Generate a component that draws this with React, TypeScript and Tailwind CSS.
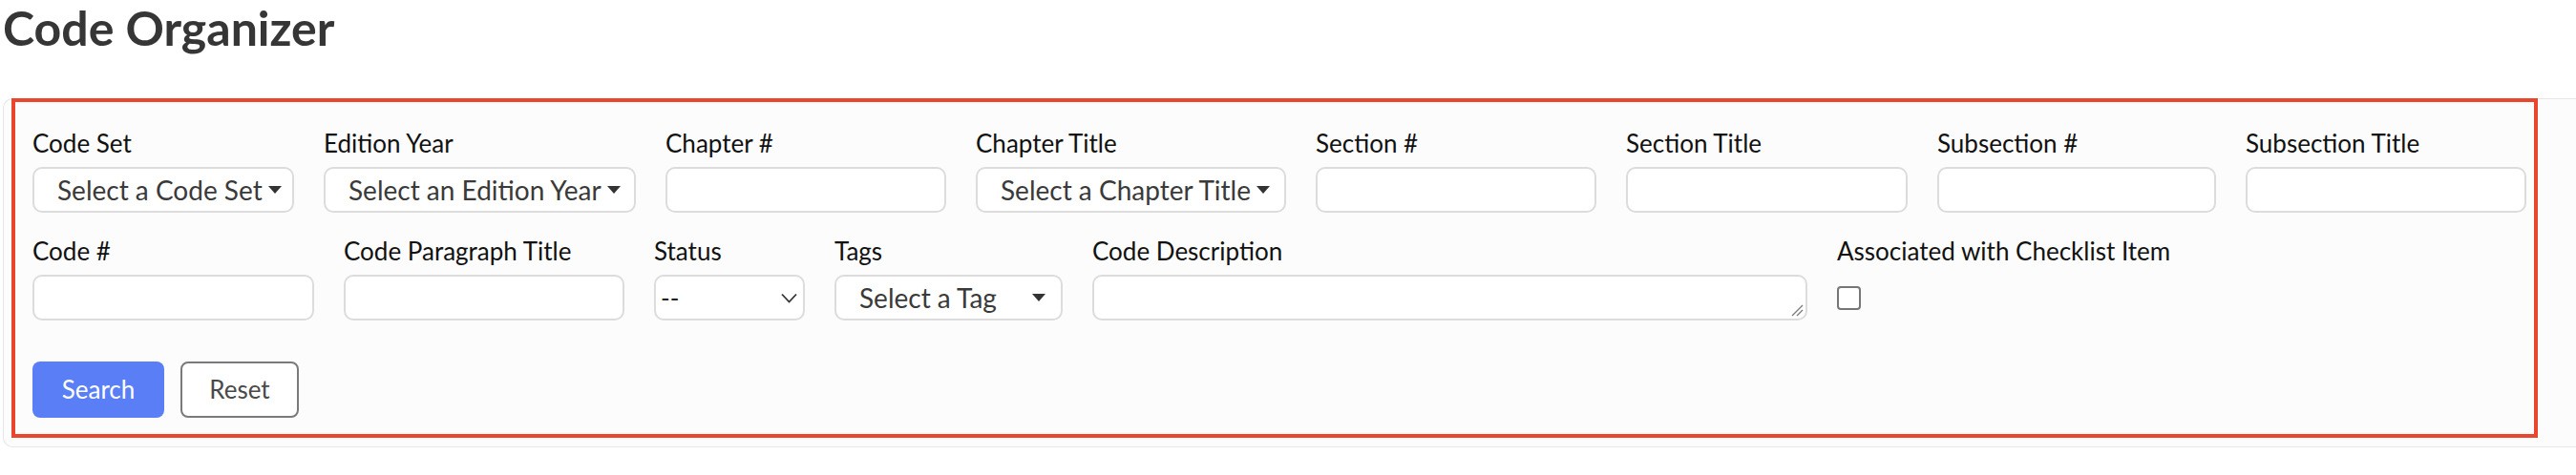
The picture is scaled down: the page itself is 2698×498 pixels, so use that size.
import React from "react";

const Caret = () => (
  <svg width="14" height="8" viewBox="0 0 14 8" className="shrink-0 ml-[6px]">
    <path d="M0 0 L14 0 L7 8 Z" fill="#333333" />
  </svg>
);

const Label = ({ children }: { children: React.ReactNode }) => (
  <div className="text-[26px] leading-[39px] text-[#111111] mb-[5px] whitespace-nowrap">{children}</div>
);

const TextField = ({ label, w }: { label: string; w: string }) => (
  <div className="flex flex-col">
    <Label>{label}</Label>
    <input type="text" className={`${w} h-[48px] border-2 border-[#dcdcdc] rounded-[10px] bg-white outline-none`} />
  </div>
);

const DropField = ({ label, text, w }: { label: string; text: string; w: string }) => (
  <div className="flex flex-col">
    <Label>{label}</Label>
    <div
      className={`${w} h-[48px] border-2 border-[#dcdcdc] rounded-[10px] bg-white flex items-center justify-between pl-[24px] pr-[16px] text-[28px] text-[#3a3a3a] whitespace-nowrap`}
    >
      <span>{text}</span>
      <Caret />
    </div>
  </div>
);

export default function App() {
  return (
    <div className="w-full overflow-hidden bg-white font-['Lato',sans-serif] pl-[3px]">
      <h1 className="text-[50px] leading-[58px] font-bold text-[#363636] mb-[45px]">Code Organizer</h1>
      <div className="border border-r-0 border-[#e6e6e6] rounded-l-[10px] bg-[#fcfcfc] pl-[8px] pb-[9px]">
        <div className="-mt-px w-[2646px] border-[4px] border-[#e9462d] pl-[18px] pt-[24px] pb-[17px]">
          <div className="flex gap-[31px]">
            <DropField label="Code Set" text="Select a Code Set" w="w-[274px]" />
            <DropField label="Edition Year" text="Select an Edition Year" w="w-[327px]" />
            <TextField label="Chapter #" w="w-[294px]" />
            <DropField label="Chapter Title" text="Select a Chapter Title" w="w-[325px]" />
            <TextField label="Section #" w="w-[294px]" />
            <TextField label="Section Title" w="w-[295px]" />
            <TextField label="Subsection #" w="w-[292px]" />
            <TextField label="Subsection Title" w="w-[294px]" />
          </div>
          <div className="flex gap-[31px] mt-[21px]">
            <TextField label="Code #" w="w-[295px]" />
            <TextField label="Code Paragraph Title" w="w-[294px]" />
            <div className="flex flex-col">
              <Label>Status</Label>
              <div className="w-[158px] h-[48px] border-2 border-[#dcdcdc] rounded-[10px] bg-white flex items-center justify-between pl-[5px] pr-[6px] text-[26px] text-[#222222]">
                <span>--</span>
                <svg width="17" height="11" viewBox="0 0 17 11" className="shrink-0">
                  <path d="M1 1.5 L8.5 9.5 L16 1.5" fill="none" stroke="#333333" strokeWidth="1.8" />
                </svg>
              </div>
            </div>
            <div className="flex flex-col">
              <Label>Tags</Label>
              <div className="w-[239px] h-[48px] border-2 border-[#dcdcdc] rounded-[10px] bg-white flex items-center justify-between pl-[24px] pr-[16px] text-[28px] text-[#3a3a3a] whitespace-nowrap">
                <span>Select a Tag</span>
                <Caret />
              </div>
            </div>
            <div className="flex flex-col">
              <Label>Code Description</Label>
              <div className="relative w-[749px] h-[48px]">
                <textarea className="w-full h-full border-2 border-[#dcdcdc] rounded-[10px] bg-white outline-none resize-none block" />
                <svg width="14" height="14" viewBox="0 0 14 14" className="absolute right-[4px] bottom-[4px]">
                  <path d="M13 2 L2 13 M13 7 L7 13" stroke="#7a7a7a" strokeWidth="1.3" />
                </svg>
              </div>
            </div>
            <div className="flex flex-col">
              <Label>Associated with Checklist Item</Label>
              <div className="h-[48px] flex items-center">
                <div className="w-[25px] h-[25px] border-2 border-[#767676] rounded-[4px] bg-white" />
              </div>
            </div>
          </div>
          <div className="flex gap-[17px] mt-[43px]">
            <button className="w-[138px] h-[59px] rounded-[8px] bg-[#5a7ef6] text-white text-[26px]">Search</button>
            <button className="w-[124px] h-[59px] rounded-[8px] border-2 border-[#7a7a7a] bg-white text-[#4a4a4a] text-[26px]">Reset</button>
          </div>
        </div>
      </div>
    </div>
  );
}
